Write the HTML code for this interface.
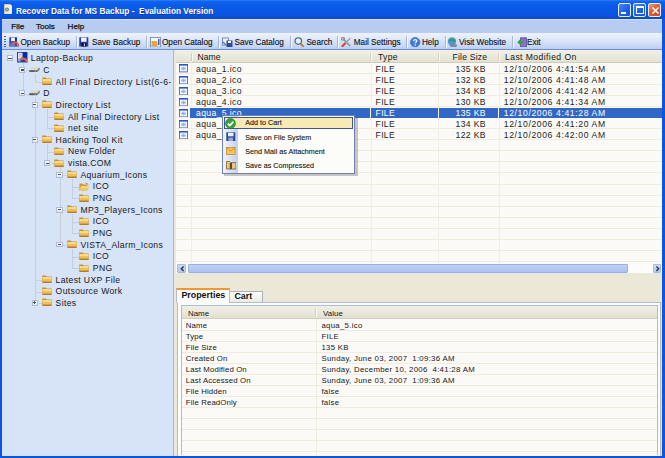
<!DOCTYPE html>
<html><head><meta charset="utf-8"><style>
*{margin:0;padding:0;box-sizing:border-box}
html,body{width:665px;height:458px;overflow:hidden;background:#0b55e0;font-family:"Liberation Sans", sans-serif;position:relative}
.a{position:absolute}
.t{position:absolute;white-space:nowrap;color:#222}
.exp{position:absolute;width:6.2px;height:5.8px;border:1px solid #aebbd6;background:linear-gradient(#ffffff,#e2e8f2)}
.exp .h{position:absolute;left:0.6px;top:1.4px;width:3.2px;height:1.2px;background:#505050}
.exp .v{position:absolute;left:1.6px;top:0.4px;width:1.2px;height:3.2px;background:#505050}
</style></head><body>
<div class="a" style="left:0;top:0;width:665px;height:19px;background:linear-gradient(#2f7df4 0,#0d5fee 2px,#0a58e6 9px,#0852dc 16px,#0a4bcc 19px)"></div>
<svg class="a" style="left:3.7px;top:4.3px" width="8.6" height="10.2" viewBox="0 0 8.6 10.2"><path d="M0.3 0.3h6l2 2v7.6h-8z" fill="#f4eed8" stroke="#d8c890" stroke-width="0.6"/><circle cx="3" cy="5.6" r="2.1" fill="#7888a0"/><circle cx="3" cy="5.6" r="0.7" fill="#e8ecf4"/></svg>
<div class="t " style="left:16px;top:6.03px;font-size:8.3px;line-height:10.38px;font-weight:bold;color:#fff;white-space:pre;text-shadow:0.6px 0.6px 0 rgba(10,40,140,0.6);">Recover Data for MS Backup -  Evaluation Version</div>
<div class="a" style="left:617.5px;top:3px;width:13.5px;height:13.5px;border:1px solid #e8eefa;border-radius:2px;background:linear-gradient(135deg,#4a88f4,#1c5ee6 60%,#1454de)"><div class="a" style="left:2.5px;top:8px;width:5px;height:2px;background:#fff"></div></div>
<div class="a" style="left:632.8px;top:3px;width:13.5px;height:13.5px;border:1px solid #e8eefa;border-radius:2px;background:linear-gradient(135deg,#4a88f4,#1c5ee6 60%,#1454de)"><div class="a" style="left:2px;top:2px;width:8px;height:7.5px;border:1px solid #fff;border-top-width:2px"></div></div>
<div class="a" style="left:647.8px;top:3px;width:13.5px;height:13.5px;border:1px solid #e8eefa;border-radius:2px;background:linear-gradient(135deg,#f09a70,#e0582c 50%,#d04a20)"><svg class="a" style="left:1.8px;top:1.8px" width="9" height="9" viewBox="0 0 9 9"><path d="M1.5 1.5l6 6M7.5 1.5l-6 6" stroke="#fff" stroke-width="1.5"/></svg></div>
<div class="a" style="left:0;top:18px;width:2px;height:440px;background:#0b55e0"></div>
<div class="a" style="left:662px;top:18px;width:3px;height:440px;background:#0b55e0"></div>
<div class="a" style="left:0;top:455.5px;width:665px;height:2.5px;background:#0b55e0"></div>
<div class="a" style="left:2px;top:18.5px;width:660px;height:14.5px;background:#b8ccf1;border-top:1px solid #d4e0f8"></div>
<div class="t " style="left:11.2px;top:21.63px;font-size:8.1px;line-height:10.12px;color:#111;-webkit-text-stroke:0.25px #111;">File</div>
<div class="t " style="left:36px;top:21.63px;font-size:8.1px;line-height:10.12px;color:#111;-webkit-text-stroke:0.25px #111;">Tools</div>
<div class="t " style="left:67.6px;top:21.63px;font-size:8.1px;line-height:10.12px;color:#111;-webkit-text-stroke:0.25px #111;">Help</div>
<div class="a" style="left:2px;top:33px;width:660px;height:16.5px;background:linear-gradient(#eef3fc 0,#dfe8f9 35%,#c9d8f4 75%,#b7caee 100%)"></div>
<div class="a" style="left:2px;top:49px;width:660px;height:1px;background:#6b8fd6"></div>
<div class="a" style="left:3.5px;top:36px;width:2px;height:11px;background:repeating-linear-gradient(#4a5e94 0 1.3px,transparent 1.3px 2.6px)"></div>
<svg class="a" style="left:8.6px;top:36.8px" width="11" height="10.5" viewBox="0 0 11 10.5"><rect x="0.3" y="0.3" width="7.6" height="9.2" fill="#2840b0"/><rect x="2" y="0.6" width="4" height="3.6" fill="#eef0f8"/><rect x="6.5" y="0.6" width="1" height="3" fill="#101850"/><rect x="1.2" y="5.6" width="5" height="3.6" fill="#6878c8"/><path d="M4 6.2c2.5-1.2 5-0.8 5.2 1.6 0.1 1-0.4 1.8-1 2.2" stroke="#f05a1c" stroke-width="1.6" fill="none"/><path d="M3 6.6l2.2-2v3.6z" fill="#f05a1c"/></svg>
<div class="t " style="left:20.5px;top:38.23px;font-size:8.2px;line-height:10.25px;color:#111;-webkit-text-stroke:0.12px #111;">Open Backup</div>
<div class="a" style="left:75.8px;top:36px;width:1px;height:11.5px;background:#a3b6de;box-shadow:1px 0 0 #f6f9ff"></div>
<svg class="a" style="left:79.4px;top:36.8px" width="11" height="10.5" viewBox="0 0 11 10.5"><rect x="0.3" y="0.3" width="9" height="9.2" fill="#2a38a8"/><rect x="2" y="0.6" width="5.6" height="4.2" fill="#f0f2fa"/><rect x="2.6" y="6" width="4.6" height="3.5" fill="#101020"/><rect x="4.8" y="6.6" width="1.2" height="2.2" fill="#e0e4f0"/></svg>
<div class="t " style="left:92px;top:38.23px;font-size:8.2px;line-height:10.25px;color:#111;-webkit-text-stroke:0.12px #111;">Save Backup</div>
<div class="a" style="left:145.6px;top:36px;width:1px;height:11.5px;background:#a3b6de;box-shadow:1px 0 0 #f6f9ff"></div>
<svg class="a" style="left:149.6px;top:36.8px" width="11" height="10.5" viewBox="0 0 11 10.5"><rect x="0.5" y="0.5" width="10" height="9.5" fill="#f6f8fc" stroke="#7a8ab8" stroke-width="0.9"/><path d="M1.5 4h5l1 1v4.5h-6z" fill="#e6a838"/><rect x="8" y="2" width="1.5" height="6" fill="#3a5ab0"/></svg>
<div class="t " style="left:162px;top:38.23px;font-size:8.2px;line-height:10.25px;color:#111;-webkit-text-stroke:0.12px #111;">Open Catalog</div>
<div class="a" style="left:218px;top:36px;width:1px;height:11.5px;background:#a3b6de;box-shadow:1px 0 0 #f6f9ff"></div>
<svg class="a" style="left:221.8px;top:36.8px" width="11" height="10.5" viewBox="0 0 11 10.5"><rect x="0.5" y="1" width="6" height="7" fill="#e8eef8" stroke="#6a7ab0" stroke-width="0.8"/><rect x="4.5" y="3.5" width="6" height="6.5" fill="#2a4aa0"/><rect x="6" y="4" width="3" height="2" fill="#fff"/><path d="M1 5l3 3" stroke="#3a9a40" stroke-width="1.2"/></svg>
<div class="t " style="left:234.6px;top:38.23px;font-size:8.2px;line-height:10.25px;color:#111;-webkit-text-stroke:0.12px #111;">Save Catalog</div>
<div class="a" style="left:290.4px;top:36px;width:1px;height:11.5px;background:#a3b6de;box-shadow:1px 0 0 #f6f9ff"></div>
<svg class="a" style="left:293.6px;top:36.8px" width="11" height="10.5" viewBox="0 0 11 10.5"><circle cx="4.3" cy="4.1" r="3.3" fill="#dcefff" stroke="#5a646e" stroke-width="1.2"/><path d="M2.6 3.2a2 2 0 0 1 2-1.4" stroke="#fff" stroke-width="0.8" fill="none"/><path d="M6.7 6.6l3 3.2" stroke="#b87a30" stroke-width="1.9"/></svg>
<div class="t " style="left:306.4px;top:38.23px;font-size:8.2px;line-height:10.25px;color:#111;-webkit-text-stroke:0.12px #111;">Search</div>
<div class="a" style="left:337px;top:36px;width:1px;height:11.5px;background:#a3b6de;box-shadow:1px 0 0 #f6f9ff"></div>
<svg class="a" style="left:340.5px;top:36.8px" width="11" height="10.5" viewBox="0 0 11 10.5"><path d="M2 1.5l7 7.5" stroke="#8a8e96" stroke-width="1.6"/><circle cx="2" cy="1.8" r="1.5" fill="none" stroke="#8a8e96" stroke-width="1.1"/><path d="M9.5 1l-5 5" stroke="#9aa0a8" stroke-width="1.2"/><path d="M4.5 6l-3.6 3.8" stroke="#e0401a" stroke-width="2"/></svg>
<div class="t " style="left:353.8px;top:38.23px;font-size:8.2px;line-height:10.25px;color:#111;-webkit-text-stroke:0.12px #111;">Mail Settings</div>
<div class="a" style="left:406px;top:36px;width:1px;height:11.5px;background:#a3b6de;box-shadow:1px 0 0 #f6f9ff"></div>
<svg class="a" style="left:410px;top:36.8px" width="11" height="10.5" viewBox="0 0 11 10.5"><circle cx="5.2" cy="5.2" r="4.7" fill="#3f7ddc" stroke="#2a5aa8" stroke-width="0.6"/><path d="M3.6 4.1c0-2.1 3.2-2.1 3.2 0 0 1.1-1.6 1.1-1.6 2.1" stroke="#fff" stroke-width="1.2" fill="none"/><circle cx="5.2" cy="8.1" r="0.75" fill="#fff"/></svg>
<div class="t " style="left:421.9px;top:38.23px;font-size:8.2px;line-height:10.25px;color:#111;-webkit-text-stroke:0.12px #111;">Help</div>
<div class="a" style="left:444.8px;top:36px;width:1px;height:11.5px;background:#a3b6de;box-shadow:1px 0 0 #f6f9ff"></div>
<svg class="a" style="left:447px;top:36.8px" width="11" height="10.5" viewBox="0 0 11 10.5"><circle cx="5" cy="4.5" r="4.2" fill="#4a9ad8"/><path d="M2 3c1.2 0 2 1.2 3 0s2.2 1 2.5 2.2" stroke="#3a9a40" stroke-width="1.6" fill="none"/><ellipse cx="6.5" cy="8.6" rx="3.8" ry="1.6" fill="#7a88a0"/></svg>
<div class="t " style="left:459px;top:38.23px;font-size:8.2px;line-height:10.25px;color:#111;-webkit-text-stroke:0.12px #111;">Visit Website</div>
<div class="a" style="left:512px;top:36px;width:1px;height:11.5px;background:#a3b6de;box-shadow:1px 0 0 #f6f9ff"></div>
<svg class="a" style="left:516.5px;top:36.8px" width="11" height="10.5" viewBox="0 0 11 10.5"><path d="M3.5 0.8h6v9h-6z" fill="#8a72c8" stroke="#54448c" stroke-width="0.8"/><path d="M0.3 5.3l3.2-3.2v2h3.2v2.4h-3.2v2z" fill="#38a040"/></svg>
<div class="t " style="left:527px;top:38.23px;font-size:8.2px;line-height:10.25px;color:#111;-webkit-text-stroke:0.12px #111;">Exit</div>
<div class="a" style="left:2px;top:50px;width:171px;height:405.5px;background:#d7e3f6"></div>
<div class="a" style="left:26.2px;top:70.2px;width:3px;height:1px;background:#c8ced9"></div>
<div class="a" style="left:35.1px;top:81.8px;width:6.5px;height:1px;background:#c8ced9"></div>
<div class="a" style="left:26.2px;top:93.5px;width:3px;height:1px;background:#c8ced9"></div>
<div class="a" style="left:38.6px;top:105.1px;width:3px;height:1px;background:#c8ced9"></div>
<div class="a" style="left:47.4px;top:116.8px;width:6.5px;height:1px;background:#c8ced9"></div>
<div class="a" style="left:47.4px;top:128.4px;width:6.5px;height:1px;background:#c8ced9"></div>
<div class="a" style="left:38.6px;top:140.1px;width:3px;height:1px;background:#c8ced9"></div>
<div class="a" style="left:47.4px;top:151.7px;width:6.5px;height:1px;background:#c8ced9"></div>
<div class="a" style="left:50.9px;top:163.4px;width:3px;height:1px;background:#c8ced9"></div>
<div class="a" style="left:63.3px;top:175.0px;width:3px;height:1px;background:#c8ced9"></div>
<div class="a" style="left:72.2px;top:186.7px;width:6.5px;height:1px;background:#c8ced9"></div>
<div class="a" style="left:72.2px;top:198.3px;width:6.5px;height:1px;background:#c8ced9"></div>
<div class="a" style="left:63.3px;top:210.0px;width:3px;height:1px;background:#c8ced9"></div>
<div class="a" style="left:72.2px;top:221.6px;width:6.5px;height:1px;background:#c8ced9"></div>
<div class="a" style="left:72.2px;top:233.2px;width:6.5px;height:1px;background:#c8ced9"></div>
<div class="a" style="left:63.3px;top:244.9px;width:3px;height:1px;background:#c8ced9"></div>
<div class="a" style="left:72.2px;top:256.6px;width:6.5px;height:1px;background:#c8ced9"></div>
<div class="a" style="left:72.2px;top:268.2px;width:6.5px;height:1px;background:#c8ced9"></div>
<div class="a" style="left:35.1px;top:279.9px;width:6.5px;height:1px;background:#c8ced9"></div>
<div class="a" style="left:35.1px;top:291.5px;width:6.5px;height:1px;background:#c8ced9"></div>
<div class="a" style="left:38.6px;top:303.1px;width:3px;height:1px;background:#c8ced9"></div>
<div class="a" style="left:22.7px;top:62.5px;width:1px;height:31.0px;background:#c8ced9"></div>
<div class="a" style="left:35.1px;top:74.2px;width:1px;height:7.6px;background:#c8ced9"></div>
<div class="a" style="left:35.1px;top:97.5px;width:1px;height:205.7px;background:#c8ced9"></div>
<div class="a" style="left:47.4px;top:109.1px;width:1px;height:19.3px;background:#c8ced9"></div>
<div class="a" style="left:47.4px;top:144.1px;width:1px;height:19.3px;background:#c8ced9"></div>
<div class="a" style="left:59.8px;top:167.4px;width:1px;height:77.5px;background:#c8ced9"></div>
<div class="a" style="left:72.2px;top:179.0px;width:1px;height:19.3px;background:#c8ced9"></div>
<div class="a" style="left:72.2px;top:214.0px;width:1px;height:19.3px;background:#c8ced9"></div>
<div class="a" style="left:72.2px;top:248.9px;width:1px;height:19.3px;background:#c8ced9"></div>
<div class="exp" style="left:6.9px;top:55.3px"><div class="h"></div></div>
<svg class="a" style="left:17px;top:52.2px" width="10.5" height="10.5" viewBox="0 0 10.5 10.5"><rect x="0" y="0" width="10.5" height="10.5" fill="#1f3fb8"/><rect x="5" y="0.5" width="5" height="5" fill="#0a28a8"/><rect x="1" y="0.8" width="4.5" height="6" fill="#e4e8f2"/><path d="M1.8 2.5h2.8M1.8 4h2.8" stroke="#9aa0b0" stroke-width="0.6"/><rect x="0.8" y="7" width="3" height="2.5" fill="#8ea0d8"/><path d="M9.5 9.8c0-2.6-2-3.4-5.5-3.4" stroke="#f06a28" stroke-width="1.8" fill="none"/><path d="M5.5 4.2l-2.6 2.2 2.6 2.2z" fill="#f06a28"/></svg>
<div class="t " style="left:30.8px;top:53.25px;font-size:8.6px;line-height:10.75px;letter-spacing:0.35px;color:#161616;">Laptop-Backup</div>
<div class="exp" style="left:19.3px;top:67.0px"><div class="h"></div></div>
<svg class="a" style="left:28.5px;top:66.8px" width="11" height="5.5" viewBox="0 0 11 5.5"><path d="M0.3 3.2l3-2.9h7.4l-2.6 2.9z" fill="#d8d8d4"/><path d="M0.3 3.2h7.8v2h-7.8z" fill="#5a5a58"/><path d="M8.1 3.2l2.6-2.9v2.4l-2.6 2.5z" fill="#7a7a76"/><rect x="5.5" y="3.6" width="1.6" height="1" fill="#c8b040"/></svg>
<div class="t " style="left:43.2px;top:64.9px;font-size:8.6px;line-height:10.75px;letter-spacing:0.35px;color:#161616;">C</div>
<svg class="a" style="left:42.1px;top:77.1px" width="10" height="8" viewBox="0 0 10 8"><path d="M0.3 0.6h3.4l0.9 0.9h5v6.3h-9.3z" fill="#c8902c"/><rect x="0.6" y="2.2" width="8.8" height="5.2" fill="#f0c058"/><rect x="0.6" y="2.2" width="8.8" height="1.6" fill="#fbe0a0"/><rect x="0.6" y="6.6" width="9" height="1.2" fill="#a8741c"/></svg>
<div class="t " style="left:55.6px;top:76.55px;font-size:8.6px;line-height:10.75px;letter-spacing:0.52px;color:#161616;width:115.6px;overflow:hidden;">All Final Directory List(6-6-07)</div>
<div class="exp" style="left:19.3px;top:90.2px"><div class="h"></div></div>
<svg class="a" style="left:28.5px;top:90.0px" width="11" height="5.5" viewBox="0 0 11 5.5"><path d="M0.3 3.2l3-2.9h7.4l-2.6 2.9z" fill="#d8d8d4"/><path d="M0.3 3.2h7.8v2h-7.8z" fill="#5a5a58"/><path d="M8.1 3.2l2.6-2.9v2.4l-2.6 2.5z" fill="#7a7a76"/><rect x="5.5" y="3.6" width="1.6" height="1" fill="#c8b040"/></svg>
<div class="t " style="left:43.2px;top:88.2px;font-size:8.6px;line-height:10.75px;letter-spacing:0.35px;color:#161616;">D</div>
<div class="exp" style="left:31.7px;top:101.9px"><div class="h"></div></div>
<svg class="a" style="left:42.1px;top:100.4px" width="10" height="8" viewBox="0 0 10 8"><path d="M0.3 0.6h3.4l0.9 0.9h5v6.3h-9.3z" fill="#c8902c"/><rect x="0.6" y="2.2" width="8.8" height="5.2" fill="#f0c058"/><rect x="0.6" y="2.2" width="8.8" height="1.6" fill="#fbe0a0"/><rect x="0.6" y="6.6" width="9" height="1.2" fill="#a8741c"/></svg>
<div class="t " style="left:55.6px;top:99.85px;font-size:8.6px;line-height:10.75px;letter-spacing:0.35px;color:#161616;">Directory List</div>
<svg class="a" style="left:54.4px;top:112.0px" width="10" height="8" viewBox="0 0 10 8"><path d="M0.3 0.6h3.4l0.9 0.9h5v6.3h-9.3z" fill="#c8902c"/><rect x="0.6" y="2.2" width="8.8" height="5.2" fill="#f0c058"/><rect x="0.6" y="2.2" width="8.8" height="1.6" fill="#fbe0a0"/><rect x="0.6" y="6.6" width="9" height="1.2" fill="#a8741c"/></svg>
<div class="t " style="left:68.0px;top:111.5px;font-size:8.6px;line-height:10.75px;letter-spacing:0.35px;color:#161616;">All Final Directory List</div>
<svg class="a" style="left:54.4px;top:123.7px" width="10" height="8" viewBox="0 0 10 8"><path d="M0.3 0.6h3.4l0.9 0.9h5v6.3h-9.3z" fill="#c8902c"/><rect x="0.6" y="2.2" width="8.8" height="5.2" fill="#f0c058"/><rect x="0.6" y="2.2" width="8.8" height="1.6" fill="#fbe0a0"/><rect x="0.6" y="6.6" width="9" height="1.2" fill="#a8741c"/></svg>
<div class="t " style="left:68.0px;top:123.15px;font-size:8.6px;line-height:10.75px;letter-spacing:0.35px;color:#161616;">net site</div>
<div class="exp" style="left:31.7px;top:136.9px"><div class="h"></div></div>
<svg class="a" style="left:42.1px;top:135.4px" width="10" height="8" viewBox="0 0 10 8"><path d="M0.3 0.6h3.4l0.9 0.9h5v6.3h-9.3z" fill="#c8902c"/><rect x="0.6" y="2.2" width="8.8" height="5.2" fill="#f0c058"/><rect x="0.6" y="2.2" width="8.8" height="1.6" fill="#fbe0a0"/><rect x="0.6" y="6.6" width="9" height="1.2" fill="#a8741c"/></svg>
<div class="t " style="left:55.6px;top:134.8px;font-size:8.6px;line-height:10.75px;letter-spacing:0.35px;color:#161616;">Hacking Tool Kit</div>
<svg class="a" style="left:54.4px;top:147.0px" width="10" height="8" viewBox="0 0 10 8"><path d="M0.3 0.6h3.4l0.9 0.9h5v6.3h-9.3z" fill="#c8902c"/><rect x="0.6" y="2.2" width="8.8" height="5.2" fill="#f0c058"/><rect x="0.6" y="2.2" width="8.8" height="1.6" fill="#fbe0a0"/><rect x="0.6" y="6.6" width="9" height="1.2" fill="#a8741c"/></svg>
<div class="t " style="left:68.0px;top:146.45px;font-size:8.6px;line-height:10.75px;letter-spacing:0.35px;color:#161616;">New Folder</div>
<div class="exp" style="left:44.0px;top:160.2px"><div class="h"></div></div>
<svg class="a" style="left:54.4px;top:158.7px" width="10" height="8" viewBox="0 0 10 8"><path d="M0.3 0.6h3.4l0.9 0.9h5v6.3h-9.3z" fill="#c8902c"/><rect x="0.6" y="2.2" width="8.8" height="5.2" fill="#f0c058"/><rect x="0.6" y="2.2" width="8.8" height="1.6" fill="#fbe0a0"/><rect x="0.6" y="6.6" width="9" height="1.2" fill="#a8741c"/></svg>
<div class="t " style="left:68.0px;top:158.1px;font-size:8.6px;line-height:10.75px;letter-spacing:0.35px;color:#161616;">vista.COM</div>
<div class="exp" style="left:56.4px;top:171.8px"><div class="h"></div></div>
<svg class="a" style="left:66.8px;top:170.3px" width="10" height="8" viewBox="0 0 10 8"><path d="M0.3 0.6h3.4l0.9 0.9h5v6.3h-9.3z" fill="#c8902c"/><rect x="0.6" y="2.2" width="8.8" height="5.2" fill="#f0c058"/><rect x="0.6" y="2.2" width="8.8" height="1.6" fill="#fbe0a0"/><rect x="0.6" y="6.6" width="9" height="1.2" fill="#a8741c"/></svg>
<div class="t " style="left:80.4px;top:169.75px;font-size:8.6px;line-height:10.75px;letter-spacing:0.35px;color:#161616;">Aquarium_Icons</div>
<svg class="a" style="left:79.2px;top:181.5px" width="10.5" height="9" viewBox="0 0 10.5 9"><path d="M0.4 1.6h3l0.8 0.9h4.2v6.1h-8z" fill="#d49a30"/><path d="M1.8 4.2h8.4l-1.7 4.4h-8.1z" fill="#f4c860"/><path d="M2.2 4.6h7.4l-0.4 1h-7.3z" fill="#fbe3a0"/><path d="M6.2 0.9l3.2 1.5" stroke="#8a8a8a" stroke-width="0.9"/></svg>
<div class="t " style="left:92.8px;top:181.4px;font-size:8.6px;line-height:10.75px;letter-spacing:0.35px;color:#161616;">ICO</div>
<svg class="a" style="left:79.2px;top:193.6px" width="10" height="8" viewBox="0 0 10 8"><path d="M0.3 0.6h3.4l0.9 0.9h5v6.3h-9.3z" fill="#c8902c"/><rect x="0.6" y="2.2" width="8.8" height="5.2" fill="#f0c058"/><rect x="0.6" y="2.2" width="8.8" height="1.6" fill="#fbe0a0"/><rect x="0.6" y="6.6" width="9" height="1.2" fill="#a8741c"/></svg>
<div class="t " style="left:92.8px;top:193.05px;font-size:8.6px;line-height:10.75px;letter-spacing:0.35px;color:#161616;">PNG</div>
<div class="exp" style="left:56.4px;top:206.8px"><div class="h"></div></div>
<svg class="a" style="left:66.8px;top:205.3px" width="10" height="8" viewBox="0 0 10 8"><path d="M0.3 0.6h3.4l0.9 0.9h5v6.3h-9.3z" fill="#c8902c"/><rect x="0.6" y="2.2" width="8.8" height="5.2" fill="#f0c058"/><rect x="0.6" y="2.2" width="8.8" height="1.6" fill="#fbe0a0"/><rect x="0.6" y="6.6" width="9" height="1.2" fill="#a8741c"/></svg>
<div class="t " style="left:80.4px;top:204.7px;font-size:8.6px;line-height:10.75px;letter-spacing:0.35px;color:#161616;">MP3_Players_Icons</div>
<svg class="a" style="left:79.2px;top:216.9px" width="10" height="8" viewBox="0 0 10 8"><path d="M0.3 0.6h3.4l0.9 0.9h5v6.3h-9.3z" fill="#c8902c"/><rect x="0.6" y="2.2" width="8.8" height="5.2" fill="#f0c058"/><rect x="0.6" y="2.2" width="8.8" height="1.6" fill="#fbe0a0"/><rect x="0.6" y="6.6" width="9" height="1.2" fill="#a8741c"/></svg>
<div class="t " style="left:92.8px;top:216.35px;font-size:8.6px;line-height:10.75px;letter-spacing:0.35px;color:#161616;">ICO</div>
<svg class="a" style="left:79.2px;top:228.6px" width="10" height="8" viewBox="0 0 10 8"><path d="M0.3 0.6h3.4l0.9 0.9h5v6.3h-9.3z" fill="#c8902c"/><rect x="0.6" y="2.2" width="8.8" height="5.2" fill="#f0c058"/><rect x="0.6" y="2.2" width="8.8" height="1.6" fill="#fbe0a0"/><rect x="0.6" y="6.6" width="9" height="1.2" fill="#a8741c"/></svg>
<div class="t " style="left:92.8px;top:228.0px;font-size:8.6px;line-height:10.75px;letter-spacing:0.35px;color:#161616;">PNG</div>
<div class="exp" style="left:56.4px;top:241.7px"><div class="h"></div></div>
<svg class="a" style="left:66.8px;top:240.2px" width="10" height="8" viewBox="0 0 10 8"><path d="M0.3 0.6h3.4l0.9 0.9h5v6.3h-9.3z" fill="#c8902c"/><rect x="0.6" y="2.2" width="8.8" height="5.2" fill="#f0c058"/><rect x="0.6" y="2.2" width="8.8" height="1.6" fill="#fbe0a0"/><rect x="0.6" y="6.6" width="9" height="1.2" fill="#a8741c"/></svg>
<div class="t " style="left:80.4px;top:239.65px;font-size:8.6px;line-height:10.75px;letter-spacing:0.35px;color:#161616;">VISTA_Alarm_Icons</div>
<svg class="a" style="left:79.2px;top:251.9px" width="10" height="8" viewBox="0 0 10 8"><path d="M0.3 0.6h3.4l0.9 0.9h5v6.3h-9.3z" fill="#c8902c"/><rect x="0.6" y="2.2" width="8.8" height="5.2" fill="#f0c058"/><rect x="0.6" y="2.2" width="8.8" height="1.6" fill="#fbe0a0"/><rect x="0.6" y="6.6" width="9" height="1.2" fill="#a8741c"/></svg>
<div class="t " style="left:92.8px;top:251.3px;font-size:8.6px;line-height:10.75px;letter-spacing:0.35px;color:#161616;">ICO</div>
<svg class="a" style="left:79.2px;top:263.5px" width="10" height="8" viewBox="0 0 10 8"><path d="M0.3 0.6h3.4l0.9 0.9h5v6.3h-9.3z" fill="#c8902c"/><rect x="0.6" y="2.2" width="8.8" height="5.2" fill="#f0c058"/><rect x="0.6" y="2.2" width="8.8" height="1.6" fill="#fbe0a0"/><rect x="0.6" y="6.6" width="9" height="1.2" fill="#a8741c"/></svg>
<div class="t " style="left:92.8px;top:262.95px;font-size:8.6px;line-height:10.75px;letter-spacing:0.35px;color:#161616;">PNG</div>
<svg class="a" style="left:42.1px;top:275.2px" width="10" height="8" viewBox="0 0 10 8"><path d="M0.3 0.6h3.4l0.9 0.9h5v6.3h-9.3z" fill="#c8902c"/><rect x="0.6" y="2.2" width="8.8" height="5.2" fill="#f0c058"/><rect x="0.6" y="2.2" width="8.8" height="1.6" fill="#fbe0a0"/><rect x="0.6" y="6.6" width="9" height="1.2" fill="#a8741c"/></svg>
<div class="t " style="left:55.6px;top:274.6px;font-size:8.6px;line-height:10.75px;letter-spacing:0.35px;color:#161616;">Latest UXP File</div>
<svg class="a" style="left:42.1px;top:286.8px" width="10" height="8" viewBox="0 0 10 8"><path d="M0.3 0.6h3.4l0.9 0.9h5v6.3h-9.3z" fill="#c8902c"/><rect x="0.6" y="2.2" width="8.8" height="5.2" fill="#f0c058"/><rect x="0.6" y="2.2" width="8.8" height="1.6" fill="#fbe0a0"/><rect x="0.6" y="6.6" width="9" height="1.2" fill="#a8741c"/></svg>
<div class="t " style="left:55.6px;top:286.25px;font-size:8.6px;line-height:10.75px;letter-spacing:0.35px;color:#161616;">Outsource Work</div>
<div class="exp" style="left:31.7px;top:299.9px"><div class="h"></div><div class="v"></div></div>
<svg class="a" style="left:42.1px;top:298.4px" width="10" height="8" viewBox="0 0 10 8"><path d="M0.3 0.6h3.4l0.9 0.9h5v6.3h-9.3z" fill="#c8902c"/><rect x="0.6" y="2.2" width="8.8" height="5.2" fill="#f0c058"/><rect x="0.6" y="2.2" width="8.8" height="1.6" fill="#fbe0a0"/><rect x="0.6" y="6.6" width="9" height="1.2" fill="#a8741c"/></svg>
<div class="t " style="left:55.6px;top:297.9px;font-size:8.6px;line-height:10.75px;letter-spacing:0.35px;color:#161616;">Sites</div>
<div class="a" style="left:173px;top:50px;width:1px;height:405.5px;background:#a9b9d6"></div>
<div class="a" style="left:174px;top:50px;width:2px;height:405.5px;background:#ebe9dd"></div>
<div class="a" style="left:176px;top:50px;width:486px;height:223px;background:#fbfaf6"></div>
<div class="a" style="left:176px;top:50px;width:486px;height:12px;background:linear-gradient(#f2f1e8,#e4e2d3)"></div>
<div class="a" style="left:176px;top:61.6px;width:486px;height:1px;background:#cdcbba"></div>
<div class="a" style="left:190.6px;top:52.5px;width:1px;height:8px;background:#d2d0c0;box-shadow:1px 0 0 #fbfbf6"></div>
<div class="a" style="left:370.4px;top:52.5px;width:1px;height:8px;background:#d2d0c0;box-shadow:1px 0 0 #fbfbf6"></div>
<div class="a" style="left:437.8px;top:52.5px;width:1px;height:8px;background:#d2d0c0;box-shadow:1px 0 0 #fbfbf6"></div>
<div class="a" style="left:498.4px;top:52.5px;width:1px;height:8px;background:#d2d0c0;box-shadow:1px 0 0 #fbfbf6"></div>
<div class="t " style="left:197.5px;top:51.65px;font-size:8.6px;line-height:10.75px;color:#161616;">Name</div>
<div class="t " style="left:378px;top:51.65px;font-size:8.6px;line-height:10.75px;letter-spacing:0.3px;color:#161616;">Type</div>
<div class="t " style="left:452.5px;top:51.65px;font-size:8.6px;line-height:10.75px;letter-spacing:0.2px;color:#161616;">File Size</div>
<div class="t " style="left:505px;top:51.65px;font-size:8.6px;line-height:10.75px;letter-spacing:0.42px;color:#161616;">Last Modified On</div>
<div class="a" style="left:176px;top:72.5px;width:486px;height:1px;background:#f0ebdf"></div>
<div class="a" style="left:176px;top:83.6px;width:486px;height:1px;background:#f0ebdf"></div>
<div class="a" style="left:176px;top:94.7px;width:486px;height:1px;background:#f0ebdf"></div>
<div class="a" style="left:176px;top:105.8px;width:486px;height:1px;background:#f0ebdf"></div>
<div class="a" style="left:176px;top:116.9px;width:486px;height:1px;background:#f0ebdf"></div>
<div class="a" style="left:176px;top:128.0px;width:486px;height:1px;background:#f0ebdf"></div>
<div class="a" style="left:176px;top:139.1px;width:486px;height:1px;background:#f0ebdf"></div>
<div class="a" style="left:176px;top:150.2px;width:486px;height:1px;background:#f0ebdf"></div>
<div class="a" style="left:176px;top:161.3px;width:486px;height:1px;background:#f0ebdf"></div>
<div class="a" style="left:176px;top:172.4px;width:486px;height:1px;background:#f0ebdf"></div>
<div class="a" style="left:176px;top:183.5px;width:486px;height:1px;background:#f0ebdf"></div>
<div class="a" style="left:176px;top:194.6px;width:486px;height:1px;background:#f0ebdf"></div>
<div class="a" style="left:176px;top:205.7px;width:486px;height:1px;background:#f0ebdf"></div>
<div class="a" style="left:176px;top:216.8px;width:486px;height:1px;background:#f0ebdf"></div>
<div class="a" style="left:176px;top:227.9px;width:486px;height:1px;background:#f0ebdf"></div>
<div class="a" style="left:176px;top:239.0px;width:486px;height:1px;background:#f0ebdf"></div>
<div class="a" style="left:176px;top:250.1px;width:486px;height:1px;background:#f0ebdf"></div>
<div class="a" style="left:176px;top:261.2px;width:486px;height:1px;background:#f0ebdf"></div>
<div class="a" style="left:190.6px;top:62px;width:1px;height:202px;background:#f1eee3"></div>
<div class="a" style="left:370.6px;top:62px;width:1px;height:202px;background:#f1eee3"></div>
<div class="a" style="left:438px;top:62px;width:1px;height:202px;background:#f1eee3"></div>
<div class="a" style="left:498.6px;top:62px;width:1px;height:202px;background:#f1eee3"></div>
<svg class="a" style="left:179.2px;top:64.4px" width="9" height="8.4" viewBox="0 0 9 8.4"><rect x="0.5" y="0.5" width="8" height="7.4" fill="#f4f7fd" stroke="#5a78c0" stroke-width="1"/><rect x="0" y="0" width="9" height="1.6" fill="#2f56c8"/><rect x="2.2" y="2.8" width="4.6" height="3.4" fill="#c4d2f0"/><path d="M4.5 2.8v3.4M2.2 4.5h4.6" stroke="#8aa0d8" stroke-width="0.6"/></svg>
<div class="t " style="left:196px;top:63.85px;font-size:8.6px;line-height:10.75px;letter-spacing:0.38px;color:#222;">aqua_1.ico</div>
<div class="t " style="left:375.6px;top:63.85px;font-size:8.6px;line-height:10.75px;letter-spacing:0.3px;color:#222;">FILE</div>
<div class="t " style="left:455.6px;top:63.85px;font-size:8.6px;line-height:10.75px;letter-spacing:0.35px;color:#222;">135 KB</div>
<div class="t " style="left:503.8px;top:63.85px;font-size:8.6px;line-height:10.75px;letter-spacing:0.62px;color:#222;">12/10/2006 4:41:54 AM</div>
<svg class="a" style="left:179.2px;top:75.5px" width="9" height="8.4" viewBox="0 0 9 8.4"><rect x="0.5" y="0.5" width="8" height="7.4" fill="#f4f7fd" stroke="#5a78c0" stroke-width="1"/><rect x="0" y="0" width="9" height="1.6" fill="#2f56c8"/><rect x="2.2" y="2.8" width="4.6" height="3.4" fill="#c4d2f0"/><path d="M4.5 2.8v3.4M2.2 4.5h4.6" stroke="#8aa0d8" stroke-width="0.6"/></svg>
<div class="t " style="left:196px;top:74.95px;font-size:8.6px;line-height:10.75px;letter-spacing:0.38px;color:#222;">aqua_2.ico</div>
<div class="t " style="left:375.6px;top:74.95px;font-size:8.6px;line-height:10.75px;letter-spacing:0.3px;color:#222;">FILE</div>
<div class="t " style="left:455.6px;top:74.95px;font-size:8.6px;line-height:10.75px;letter-spacing:0.35px;color:#222;">132 KB</div>
<div class="t " style="left:503.8px;top:74.95px;font-size:8.6px;line-height:10.75px;letter-spacing:0.62px;color:#222;">12/10/2006 4:41:48 AM</div>
<svg class="a" style="left:179.2px;top:86.6px" width="9" height="8.4" viewBox="0 0 9 8.4"><rect x="0.5" y="0.5" width="8" height="7.4" fill="#f4f7fd" stroke="#5a78c0" stroke-width="1"/><rect x="0" y="0" width="9" height="1.6" fill="#2f56c8"/><rect x="2.2" y="2.8" width="4.6" height="3.4" fill="#c4d2f0"/><path d="M4.5 2.8v3.4M2.2 4.5h4.6" stroke="#8aa0d8" stroke-width="0.6"/></svg>
<div class="t " style="left:196px;top:86.05px;font-size:8.6px;line-height:10.75px;letter-spacing:0.38px;color:#222;">aqua_3.ico</div>
<div class="t " style="left:375.6px;top:86.05px;font-size:8.6px;line-height:10.75px;letter-spacing:0.3px;color:#222;">FILE</div>
<div class="t " style="left:455.6px;top:86.05px;font-size:8.6px;line-height:10.75px;letter-spacing:0.35px;color:#222;">134 KB</div>
<div class="t " style="left:503.8px;top:86.05px;font-size:8.6px;line-height:10.75px;letter-spacing:0.62px;color:#222;">12/10/2006 4:41:42 AM</div>
<svg class="a" style="left:179.2px;top:97.7px" width="9" height="8.4" viewBox="0 0 9 8.4"><rect x="0.5" y="0.5" width="8" height="7.4" fill="#f4f7fd" stroke="#5a78c0" stroke-width="1"/><rect x="0" y="0" width="9" height="1.6" fill="#2f56c8"/><rect x="2.2" y="2.8" width="4.6" height="3.4" fill="#c4d2f0"/><path d="M4.5 2.8v3.4M2.2 4.5h4.6" stroke="#8aa0d8" stroke-width="0.6"/></svg>
<div class="t " style="left:196px;top:97.15px;font-size:8.6px;line-height:10.75px;letter-spacing:0.38px;color:#222;">aqua_4.ico</div>
<div class="t " style="left:375.6px;top:97.15px;font-size:8.6px;line-height:10.75px;letter-spacing:0.3px;color:#222;">FILE</div>
<div class="t " style="left:455.6px;top:97.15px;font-size:8.6px;line-height:10.75px;letter-spacing:0.35px;color:#222;">130 KB</div>
<div class="t " style="left:503.8px;top:97.15px;font-size:8.6px;line-height:10.75px;letter-spacing:0.62px;color:#222;">12/10/2006 4:41:34 AM</div>
<div class="a" style="left:189.5px;top:107.7px;width:180.7px;height:10.3px;background:#3168c6"></div>
<div class="a" style="left:371.4px;top:107.7px;width:66.2px;height:10.3px;background:#3168c6"></div>
<div class="a" style="left:438.8px;top:107.7px;width:59.4px;height:10.3px;background:#3168c6"></div>
<div class="a" style="left:499.4px;top:107.7px;width:162.6px;height:10.3px;background:#3168c6"></div>
<svg class="a" style="left:179.2px;top:108.8px" width="9" height="8.4" viewBox="0 0 9 8.4"><rect x="0.5" y="0.5" width="8" height="7.4" fill="#f4f7fd" stroke="#5a78c0" stroke-width="1"/><rect x="0" y="0" width="9" height="1.6" fill="#2f56c8"/><rect x="2.2" y="2.8" width="4.6" height="3.4" fill="#c4d2f0"/><path d="M4.5 2.8v3.4M2.2 4.5h4.6" stroke="#8aa0d8" stroke-width="0.6"/></svg>
<div class="t " style="left:196px;top:108.25px;font-size:8.6px;line-height:10.75px;letter-spacing:0.38px;color:#fff;">aqua_5.ico</div>
<div class="t " style="left:375.6px;top:108.25px;font-size:8.6px;line-height:10.75px;letter-spacing:0.3px;color:#fff;">FILE</div>
<div class="t " style="left:455.6px;top:108.25px;font-size:8.6px;line-height:10.75px;letter-spacing:0.35px;color:#fff;">135 KB</div>
<div class="t " style="left:503.8px;top:108.25px;font-size:8.6px;line-height:10.75px;letter-spacing:0.62px;color:#fff;">12/10/2006 4:41:28 AM</div>
<svg class="a" style="left:179.2px;top:119.9px" width="9" height="8.4" viewBox="0 0 9 8.4"><rect x="0.5" y="0.5" width="8" height="7.4" fill="#f4f7fd" stroke="#5a78c0" stroke-width="1"/><rect x="0" y="0" width="9" height="1.6" fill="#2f56c8"/><rect x="2.2" y="2.8" width="4.6" height="3.4" fill="#c4d2f0"/><path d="M4.5 2.8v3.4M2.2 4.5h4.6" stroke="#8aa0d8" stroke-width="0.6"/></svg>
<div class="t " style="left:196px;top:119.35px;font-size:8.6px;line-height:10.75px;letter-spacing:0.38px;color:#222;">aqua_6.ico</div>
<div class="t " style="left:375.6px;top:119.35px;font-size:8.6px;line-height:10.75px;letter-spacing:0.3px;color:#222;">FILE</div>
<div class="t " style="left:455.6px;top:119.35px;font-size:8.6px;line-height:10.75px;letter-spacing:0.35px;color:#222;">134 KB</div>
<div class="t " style="left:503.8px;top:119.35px;font-size:8.6px;line-height:10.75px;letter-spacing:0.62px;color:#222;">12/10/2006 4:41:20 AM</div>
<svg class="a" style="left:179.2px;top:131.0px" width="9" height="8.4" viewBox="0 0 9 8.4"><rect x="0.5" y="0.5" width="8" height="7.4" fill="#f4f7fd" stroke="#5a78c0" stroke-width="1"/><rect x="0" y="0" width="9" height="1.6" fill="#2f56c8"/><rect x="2.2" y="2.8" width="4.6" height="3.4" fill="#c4d2f0"/><path d="M4.5 2.8v3.4M2.2 4.5h4.6" stroke="#8aa0d8" stroke-width="0.6"/></svg>
<div class="t " style="left:196px;top:130.45px;font-size:8.6px;line-height:10.75px;letter-spacing:0.38px;color:#222;">aqua_7.ico</div>
<div class="t " style="left:375.6px;top:130.45px;font-size:8.6px;line-height:10.75px;letter-spacing:0.3px;color:#222;">FILE</div>
<div class="t " style="left:455.6px;top:130.45px;font-size:8.6px;line-height:10.75px;letter-spacing:0.35px;color:#222;">122 KB</div>
<div class="t " style="left:503.8px;top:130.45px;font-size:8.6px;line-height:10.75px;letter-spacing:0.62px;color:#222;">12/10/2006 4:42:00 AM</div>
<div class="a" style="left:176px;top:264px;width:486px;height:9px;background:#fcfcfa"></div>
<div class="a" style="left:177px;top:264px;width:9px;height:8.7px;background:linear-gradient(#cddcf8,#b6c9f0);border:1px solid #a6bae6;border-radius:1px"></div>
<svg class="a" style="left:179.5px;top:266px" width="5" height="5.5" viewBox="0 0 5 5.5"><path d="M3.6 0.5l-2.3 2.25 2.3 2.25" stroke="#2a3050" stroke-width="1.4" fill="none"/></svg>
<div class="a" style="left:187.7px;top:264px;width:440.5px;height:8.7px;background:linear-gradient(#c0d2f6,#aac2ef);border:1px solid #98b0e2;border-radius:1px"></div>
<div class="a" style="left:652.5px;top:264px;width:8.5px;height:8.7px;background:linear-gradient(#cddcf8,#b6c9f0);border:1px solid #a6bae6;border-radius:1px"></div>
<svg class="a" style="left:654.5px;top:266px" width="5" height="5.5" viewBox="0 0 5 5.5"><path d="M1.4 0.5l2.3 2.25-2.3 2.25" stroke="#2a3050" stroke-width="1.4" fill="none"/></svg>
<div class="a" style="left:176px;top:273px;width:486px;height:182.5px;background:#ebe8d8"></div>
<div class="a" style="left:176.5px;top:302px;width:484.5px;height:153.5px;background:#fcfcfb;border:1px solid #b4bcc4;border-bottom:none"></div>
<div class="a" style="left:176.4px;top:288px;width:53.2px;height:15px;background:#fcfcfb;border:1px solid #b4bcc4;border-bottom:none;border-top:2px solid #ee9a30"></div>
<div class="t " style="left:181.4px;top:290.06px;font-size:8.9px;line-height:11.12px;font-weight:bold;color:#111;">Properties</div>
<div class="a" style="left:229.8px;top:290.8px;width:33.5px;height:11.5px;background:linear-gradient(#fefefd,#ebeae4);border:1px solid #a8b0b8;border-bottom:none;border-left:none"></div>
<div class="t " style="left:234.4px;top:290.86px;font-size:8.9px;line-height:11.12px;font-weight:bold;color:#111;">Cart</div>
<div class="a" style="left:180.5px;top:305.3px;width:477px;height:150.2px;background:#fbfaf6;border:1px solid #a8bcde;border-bottom:none"></div>
<div class="a" style="left:181.5px;top:306.3px;width:475px;height:12.2px;background:linear-gradient(#f1f0e6,#e2e0d0)"></div>
<div class="a" style="left:181.5px;top:318.3px;width:475px;height:1px;background:#cfcdbb"></div>
<div class="a" style="left:315.4px;top:309px;width:1px;height:7.5px;background:#d2d0c0;box-shadow:1px 0 0 #fbfbf6"></div>
<div class="t " style="left:188px;top:308.82px;font-size:7.9px;line-height:9.88px;color:#161616;">Name</div>
<div class="t " style="left:323px;top:308.82px;font-size:7.9px;line-height:9.88px;letter-spacing:0.1px;color:#161616;">Value</div>
<div class="a" style="left:181.5px;top:329.83px;width:475px;height:1px;background:#efebdf"></div>
<div class="a" style="left:181.5px;top:340.86px;width:475px;height:1px;background:#efebdf"></div>
<div class="a" style="left:181.5px;top:351.89px;width:475px;height:1px;background:#efebdf"></div>
<div class="a" style="left:181.5px;top:362.92px;width:475px;height:1px;background:#efebdf"></div>
<div class="a" style="left:181.5px;top:373.95px;width:475px;height:1px;background:#efebdf"></div>
<div class="a" style="left:181.5px;top:384.98px;width:475px;height:1px;background:#efebdf"></div>
<div class="a" style="left:181.5px;top:396.01px;width:475px;height:1px;background:#efebdf"></div>
<div class="a" style="left:181.5px;top:407.04px;width:475px;height:1px;background:#efebdf"></div>
<div class="a" style="left:181.5px;top:418.07px;width:475px;height:1px;background:#efebdf"></div>
<div class="a" style="left:181.5px;top:429.1px;width:475px;height:1px;background:#efebdf"></div>
<div class="a" style="left:181.5px;top:440.13px;width:475px;height:1px;background:#efebdf"></div>
<div class="a" style="left:181.5px;top:451.16px;width:475px;height:1px;background:#efebdf"></div>
<div class="a" style="left:316px;top:319.3px;width:1px;height:136px;background:#efebdd"></div>
<div class="t " style="left:185.8px;top:320.52px;font-size:7.8px;line-height:9.75px;letter-spacing:0.13px;color:#161616;">Name</div>
<div class="t " style="left:321.4px;top:320.52px;font-size:7.8px;line-height:9.75px;letter-spacing:0.3px;color:#161616;white-space:pre;">aqua_5.ico</div>
<div class="t " style="left:185.8px;top:331.55px;font-size:7.8px;line-height:9.75px;letter-spacing:0.13px;color:#161616;">Type</div>
<div class="t " style="left:321.4px;top:331.55px;font-size:7.8px;line-height:9.75px;letter-spacing:0.3px;color:#161616;white-space:pre;">FILE</div>
<div class="t " style="left:185.8px;top:342.58px;font-size:7.8px;line-height:9.75px;letter-spacing:0.13px;color:#161616;">File Size</div>
<div class="t " style="left:321.4px;top:342.58px;font-size:7.8px;line-height:9.75px;letter-spacing:0.3px;color:#161616;white-space:pre;">135 KB</div>
<div class="t " style="left:185.8px;top:353.61px;font-size:7.8px;line-height:9.75px;letter-spacing:0.13px;color:#161616;">Created On</div>
<div class="t " style="left:321.4px;top:353.61px;font-size:7.8px;line-height:9.75px;letter-spacing:0.3px;color:#161616;white-space:pre;">Sunday, June 03, 2007  1:09:36 AM</div>
<div class="t " style="left:185.8px;top:364.64px;font-size:7.8px;line-height:9.75px;letter-spacing:0.13px;color:#161616;">Last Modified On</div>
<div class="t " style="left:321.4px;top:364.64px;font-size:7.8px;line-height:9.75px;letter-spacing:0.3px;color:#161616;white-space:pre;">Sunday, December 10, 2006  4:41:28 AM</div>
<div class="t " style="left:185.8px;top:375.67px;font-size:7.8px;line-height:9.75px;letter-spacing:0.13px;color:#161616;">Last Accessed On</div>
<div class="t " style="left:321.4px;top:375.67px;font-size:7.8px;line-height:9.75px;letter-spacing:0.3px;color:#161616;white-space:pre;">Sunday, June 03, 2007  1:09:36 AM</div>
<div class="t " style="left:185.8px;top:386.7px;font-size:7.8px;line-height:9.75px;letter-spacing:0.13px;color:#161616;">File Hidden</div>
<div class="t " style="left:321.4px;top:386.7px;font-size:7.8px;line-height:9.75px;letter-spacing:0.3px;color:#161616;white-space:pre;">false</div>
<div class="t " style="left:185.8px;top:397.73px;font-size:7.8px;line-height:9.75px;letter-spacing:0.13px;color:#161616;">File ReadOnly</div>
<div class="t " style="left:321.4px;top:397.73px;font-size:7.8px;line-height:9.75px;letter-spacing:0.3px;color:#161616;white-space:pre;">false</div>
<div class="a" style="left:224px;top:117px;width:133.5px;height:59px;background:rgba(60,60,60,0.28)"></div>
<div class="a" style="left:221.8px;top:115px;width:133.5px;height:59px;background:#fcfcf9;border:1px solid #6f80b2"></div>
<div class="a" style="left:222.8px;top:116px;width:15px;height:57px;background:linear-gradient(90deg,#f0f4fc,#c2d0ee)"></div>
<div class="a" style="left:223.6px;top:116.8px;width:129.6px;height:12.6px;background:#f9e9b4;border:1px solid #40579e"></div>
<svg class="a" style="left:225.2px;top:117.6px" width="11" height="11" viewBox="0 0 11 11"><circle cx="5.5" cy="5.5" r="5" fill="#34a23c"/><circle cx="5.5" cy="5.5" r="5" fill="none" stroke="#1f7a28" stroke-width="0.6"/><path d="M2.8 5.6l2 2 3.6-4" stroke="#fff" stroke-width="1.7" fill="none"/></svg>
<svg class="a" style="left:226px;top:131.8px" width="9.5" height="9.5" viewBox="0 0 9.5 9.5"><rect x="0.3" y="0.3" width="9" height="9" fill="#2b4a9e"/><rect x="2" y="0.8" width="5.5" height="3.5" fill="#eef2fa"/><rect x="2.5" y="5.6" width="4.5" height="3.6" fill="#9aaad0"/></svg>
<svg class="a" style="left:226px;top:147px" width="9.5" height="8" viewBox="0 0 9.5 8"><rect x="0.4" y="0.4" width="8.7" height="7" fill="#f4c65c" stroke="#c48c22" stroke-width="0.8"/><path d="M0.6 0.8l4.15 3.2 4.15-3.2" stroke="#c48c22" stroke-width="0.8" fill="none"/></svg>
<svg class="a" style="left:225.5px;top:160px" width="10.5" height="9.5" viewBox="0 0 10.5 9.5"><path d="M0.5 1.5h3.2l1 1h5.3v6.5h-9.5z" fill="#e8c87c" stroke="#7a5e28" stroke-width="0.8"/><rect x="3.8" y="3" width="2.2" height="6" fill="#5a4a30"/></svg>
<div class="t " style="left:245.3px;top:118.21px;font-size:7.2px;line-height:9.0px;color:#111;-webkit-text-stroke:0.1px #111;">Add to Cart</div>
<div class="t " style="left:245.3px;top:132.61px;font-size:7.2px;line-height:9.0px;color:#111;-webkit-text-stroke:0.1px #111;">Save on File System</div>
<div class="t " style="left:245.3px;top:147.01px;font-size:7.2px;line-height:9.0px;color:#111;-webkit-text-stroke:0.1px #111;">Send Mail as Attachment</div>
<div class="t " style="left:245.3px;top:161.01px;font-size:7.2px;line-height:9.0px;color:#111;-webkit-text-stroke:0.1px #111;">Save as Compressed</div>
</body></html>
